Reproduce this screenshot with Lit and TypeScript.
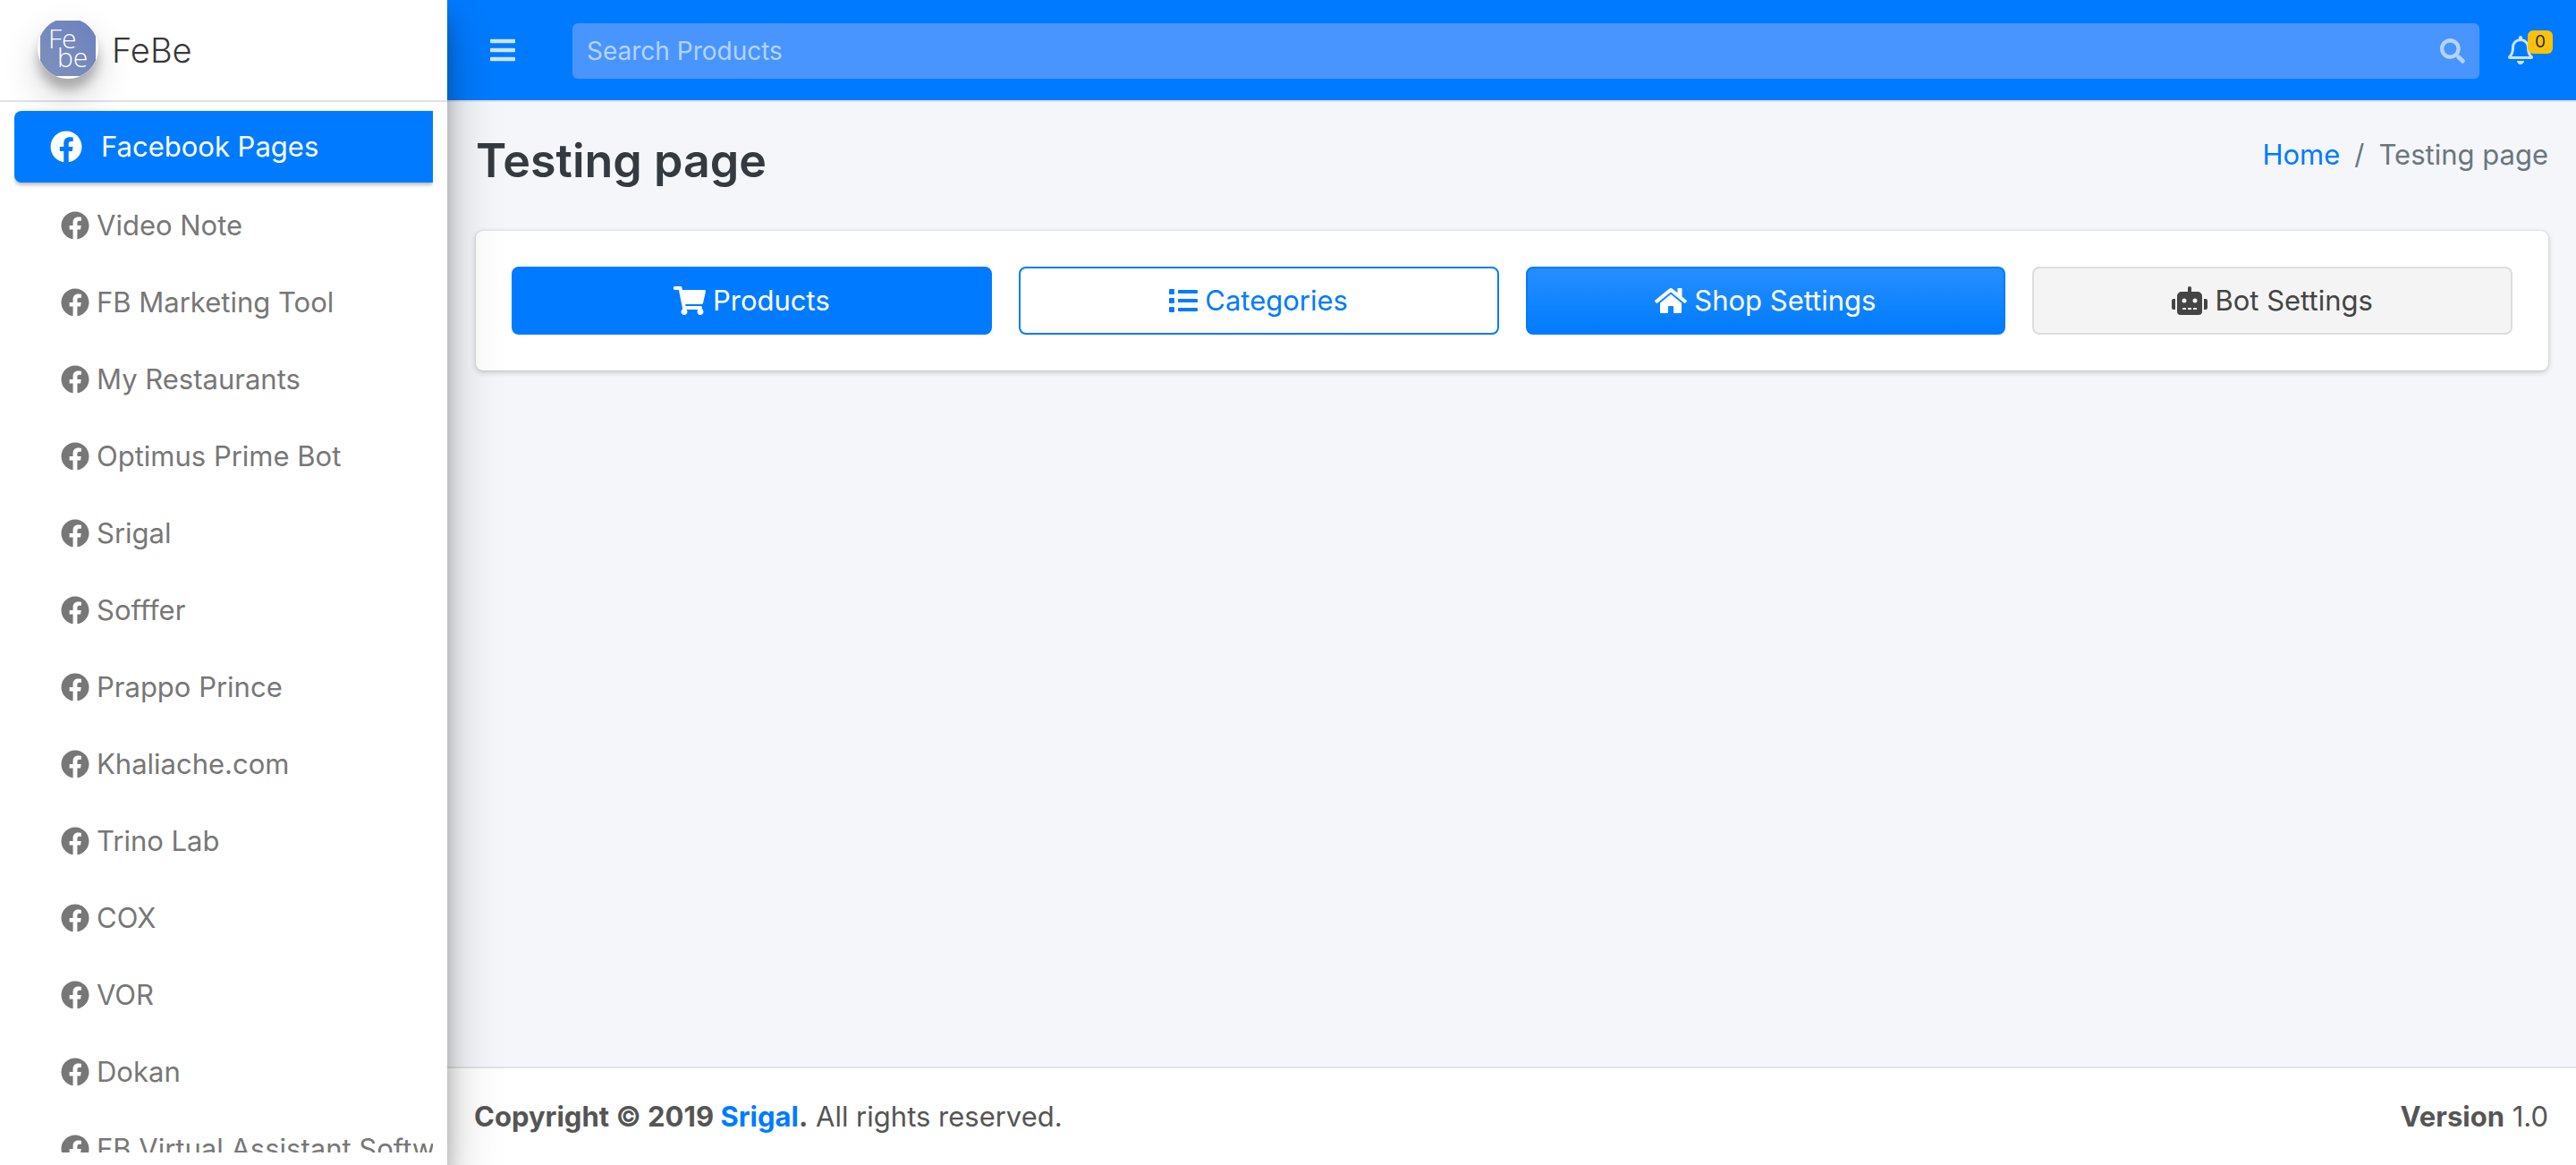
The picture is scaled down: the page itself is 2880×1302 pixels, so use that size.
import { LitElement, html, css, svg } from "lit";
import { customElement } from "lit/decorators.js";

const icons = {
  facebook: { box: "0 0 512 512", d: "M504 256C504 119 393 8 256 8S8 119 8 256c0 123.78 90.69 226.38 209.25 245V327.69h-63V256h63v-54.64c0-62.15 37-96.48 93.67-96.48 27.14 0 55.52 4.84 55.52 4.84v61h-31.28c-30.8 0-40.41 19.12-40.41 38.73V256h68.78l-11 71.69h-57.78V501C413.31 482.38 504 379.78 504 256z" },
  bars: { box: "0 0 448 512", d: "M16 132h416c8.837 0 16-7.163 16-16V76c0-8.837-7.163-16-16-16H16C7.163 60 0 67.163 0 76v40c0 8.837 7.163 16 16 16zm0 160h416c8.837 0 16-7.163 16-16v-40c0-8.837-7.163-16-16-16H16c-8.837 0-16 7.163-16 16v40c0 8.837 7.163 16 16 16zm0 160h416c8.837 0 16-7.163 16-16v-40c0-8.837-7.163-16-16-16H16c-8.837 0-16 7.163-16 16v40c0 8.837 7.163 16 16 16z" },
  search: { box: "0 0 512 512", d: "M505 442.7L405.3 343c-4.5-4.5-10.600-7-17-7H372c27.600-35.300 44-79.700 44-128C416 93.100 322.900 0 208 0S0 93.100 0 208s93.100 208 208 208c48.300 0 92.700-16.400 128-44v16.300c0 6.400 2.500 12.500 7 17l99.700 99.700c9.400 9.400 24.600 9.400 33.900 0l28.300-28.300c9.400-9.400 9.400-24.600.1-34zM208 336c-70.700 0-128-57.200-128-128 0-70.700 57.200-128 128-128 70.700 0 128 57.200 128 128 0 70.700-57.200 128-128 128z" },
  bell: { box: "0 0 448 512", d: "M439.39 362.29c-19.32-20.76-55.47-51.99-55.47-154.29 0-77.7-54.48-139.9-127.94-155.16V32c0-17.67-14.32-32-31.98-32s-31.98 14.33-31.98 32v20.84C118.56 68.1 64.08 130.3 64.08 208c0 102.3-36.15 133.53-55.47 154.29-6 6.45-8.66 14.16-8.61 21.71.11 16.4 12.98 32 32.1 32h383.8c19.12 0 32-15.6 32.1-32 .05-7.55-2.61-15.27-8.61-21.71zM67.53 368c21.22-27.97 44.42-74.33 44.53-159.42 0-.2-.06-.38-.06-.58 0-61.86 50.14-112 112-112s112 50.14 112 112c0 .2-.06.38-.06.58.11 85.1 23.31 131.46 44.53 159.42H67.53zM224 512c35.32 0 63.97-28.65 63.97-64H160.03c0 35.35 28.65 64 63.97 64z" },
  cart: { box: "0 0 576 512", d: "M528.12 301.319l47.273-208C578.806 78.301 567.391 64 551.99 64H159.208l-9.166-44.81C147.758 8.021 137.93 0 126.529 0H24C10.745 0 0 10.745 0 24v16c0 13.255 10.745 24 24 24h69.883l70.248 343.435C147.325 417.1 136 435.222 136 456c0 30.928 25.072 56 56 56s56-25.072 56-56c0-15.674-6.447-29.835-16.824-40h209.647C430.447 426.165 424 440.326 424 456c0 30.928 25.072 56 56 56s56-25.072 56-56c0-22.172-12.888-41.332-31.579-50.405l5.517-24.276c3.413-15.018-8.002-29.319-23.403-29.319H218.117l-6.545-32h293.145c11.206 0 20.920-7.754 23.403-18.681z" },
  list: { box: "0 0 512 512", d: "M80 368H16a16 16 0 0 0-16 16v64a16 16 0 0 0 16 16h64a16 16 0 0 0 16-16v-64a16 16 0 0 0-16-16zm0-320H16A16 16 0 0 0 0 64v64a16 16 0 0 0 16 16h64a16 16 0 0 0 16-16V64a16 16 0 0 0-16-16zm0 160H16a16 16 0 0 0-16 16v64a16 16 0 0 0 16 16h64a16 16 0 0 0 16-16v-64a16 16 0 0 0-16-16zm416 176H176a16 16 0 0 0-16 16v32a16 16 0 0 0 16 16h320a16 16 0 0 0 16-16v-32a16 16 0 0 0-16-16zm0-320H176a16 16 0 0 0-16 16v32a16 16 0 0 0 16 16h320a16 16 0 0 0 16-16V80a16 16 0 0 0-16-16zm0 160H176a16 16 0 0 0-16 16v32a16 16 0 0 0 16 16h320a16 16 0 0 0 16-16v-32a16 16 0 0 0-16-16z" },
  home: { box: "0 0 576 512", d: "M280.37 148.26L96 300.11V464a16 16 0 0 0 16 16l112.06-.29a16 16 0 0 0 15.920-16V368a16 16 0 0 1 16-16h64a16 16 0 0 1 16 16v95.640a16 16 0 0 0 16 16.050L464 480a16 16 0 0 0 16-16V300L295.670 148.260a12.190 12.190 0 0 0-15.300 0zM571.600 251.470L488 182.560V44.050a12 12 0 0 0-12-12h-56a12 12 0 0 0-12 12v72.610L318.470 43a48 48 0 0 0-61 0L4.340 251.470a12 12 0 0 0-1.600 16.900l25.500 31A12 12 0 0 0 45.150 301l235.220-193.740a12.190 12.190 0 0 1 15.300 0L530.900 301a12 12 0 0 0 16.900-1.600l25.500-31a12 12 0 0 0-1.700-16.930z" },
  robot: { box: "0 0 640 512", d: "M32 224h32v192H32a31.962 31.962 0 0 1-32-32V256a31.962 31.962 0 0 1 32-32zm512-48v272a64.063 64.063 0 0 1-64 64H160a64.063 64.063 0 0 1-64-64V176a79.974 79.974 0 0 1 80-80h112V32a32 32 0 0 1 64 0v64h112a79.974 79.974 0 0 1 80 80zm-280 80a40 40 0 1 0-40 40 39.997 39.997 0 0 0 40-40zm-8 128h-64v32h64zm96 0h-64v32h64zm104-128a40 40 0 1 0-40 40 39.997 39.997 0 0 0 40-40zm-8 128h-64v32h64zm192-128v128a31.962 31.962 0 0 1-32 32h-32V224h32a31.962 31.962 0 0 1 32 32z" },
};

type IconName = keyof typeof icons;

const icon = (name: IconName) => html`<svg class="icon" viewBox=${icons[name].box} aria-hidden="true">
  ${svg`<path d=${icons[name].d}></path>`}
</svg>`;

const pages = [
  "Video Note", "FB Marketing Tool", "My Restaurants", "Optimus Prime Bot", "Srigal",
  "Sofffer", "Prappo Prince", "Khaliache.com", "Trino Lab", "COX", "VOR", "Dokan",
  "FB Virtual Assistant Software",
];

const actions: { label: string; icon: IconName; style: string }[] = [
  { label: "Products", icon: "cart", style: "primary" },
  { label: "Categories", icon: "list", style: "outline" },
  { label: "Shop Settings", icon: "home", style: "gradient" },
  { label: "Bot Settings", icon: "robot", style: "plain" },
];

@customElement("app-root")
export class AppRoot extends LitElement {
  static styles = css`
    :host {
      display: grid;
      grid-template-columns: 500px minmax(0, 1fr);
      height: 100vh;
      overflow: hidden;
      font-family: Inter, "Liberation Sans", sans-serif;
      font-size: 31px;
      line-height: 48px;
      color: #212529;
      background: #f4f6f9;
    }
    * { box-sizing: border-box; }
    a { color: #007bff; text-decoration: none; }
    button, input { font: inherit; }
    ul, ol { list-style: none; margin: 0; padding: 0; }
    .icon { display: block; flex: none; height: 32px; fill: currentColor; }

    .sidebar {
      z-index: 2;
      display: flex;
      flex-direction: column;
      min-height: 0;
      padding-bottom: 14px;
      background: #fff;
      box-shadow: 0 28px 56px rgba(0, 0, 0, 0.25), 0 20px 20px rgba(0, 0, 0, 0.22);
    }
    .brand {
      display: flex;
      flex: none;
      align-items: center;
      gap: 15px;
      height: 114px;
      padding: 0 42px 4px;
      border-bottom: 2px solid #dee2e6;
      color: rgba(0, 0, 0, 0.8);
      font-size: 38px;
      font-weight: 300;
    }
    .brand-name { padding-top: 3px; }
    .logo {
      display: block;
      width: 68px;
      height: 68px;
      border-radius: 50%;
      background: #fff;
      box-shadow: 0 20px 40px rgba(0, 0, 0, 0.19), 0 12px 12px rgba(0, 0, 0, 0.23);
    }
    .logo-text { font-family: "Open Sans", sans-serif; font-weight: 300; fill: #fff; }
    .nav {
      flex: 1;
      min-height: 0;
      margin: 0 16px;
      padding-top: 10px;
      overflow: hidden;
    }
    .nav-link {
      display: flex;
      align-items: center;
      height: 80px;
      padding-left: 52px;
      gap: 8px;
      color: #777;
      white-space: nowrap;
    }
    .nav-link.active {
      padding-left: 40px;
      gap: 21px;
      border-radius: 8px 0 0 8px;
      background: #007bff;
      color: #fff;
      box-shadow: 0 2px 6px rgba(0, 0, 0, 0.12), 0 2px 4px rgba(0, 0, 0, 0.24);
    }
    .nav-link.active .icon { height: 36px; }
    .sub { display: grid; gap: 6px; padding-top: 8px; }

    .main { display: flex; flex-direction: column; min-width: 0; }
    .topbar {
      display: flex;
      flex: none;
      align-items: center;
      height: 114px;
      padding: 0 26px 0 48px;
      border-bottom: 2px solid #dee2e6;
      background: #007bff;
      color: rgba(255, 255, 255, 0.8);
    }
    .icon-button {
      display: flex;
      padding: 0;
      border: 0;
      background: none;
      color: inherit;
    }
    .search {
      display: flex;
      flex: 1;
      align-items: center;
      height: 62px;
      margin: 2px 32px 0 64px;
      padding: 0 16px;
      border-radius: 6px;
      background: #4895ff;
      color: rgba(255, 255, 255, 0.6);
    }
    .search-input {
      flex: 1;
      min-width: 0;
      padding: 0;
      border: 0;
      outline: 0;
      background: none;
      color: #fff;
      font-size: 28px;
    }
    .search-input::placeholder { color: rgba(255, 255, 255, 0.6); opacity: 1; }
    .search .icon { height: 28px; }
    .bell-button { position: relative; margin-right: 22px; }
    .badge {
      position: absolute;
      top: -6px;
      left: 22px;
      width: 28px;
      height: 26px;
      border-radius: 6px;
      background: #ffc107;
      color: #1f2d3d;
      font-size: 19px;
      line-height: 26px;
      text-align: center;
    }

    .content { flex: 1; padding: 30px 31px 0 32px; }
    .page-head {
      display: flex;
      justify-content: space-between;
      height: 114px;
    }
    .title {
      margin: 0;
      color: #343a40;
      font-size: 52px;
      font-weight: 600;
      line-height: 72px;
    }
    .crumbs { display: flex; gap: 16px; padding-top: 5px; color: #6c757d; }
    .card {
      display: grid;
      grid-template-columns: repeat(4, minmax(0, 1fr));
      gap: 30px;
      padding: 40px;
      border-radius: 8px;
      background: #fff;
      box-shadow: 0 0 2px rgba(0, 0, 0, 0.125), 0 2px 6px rgba(0, 0, 0, 0.2);
    }
    .action {
      display: flex;
      align-items: center;
      justify-content: center;
      gap: 8px;
      height: 76px;
      padding: 0;
      border: 2px solid #007bff;
      border-radius: 8px;
    }
    .primary { background: #007bff; color: #fff; }
    .outline { background: #fff; color: #007bff; }
    .gradient { background: #007bff linear-gradient(180deg, #268fff, #007bff); color: #fff; }
    .plain { background: #f4f4f4; border-color: #ddd; color: #444; }

    .footer {
      display: flex;
      flex: none;
      justify-content: space-between;
      height: 110px;
      padding: 30px 31px 0 30px;
      border-top: 2px solid #dee2e6;
      background: #fff;
      color: #555;
    }
  `;

  render() {
    return html`
      <aside class="sidebar">
        <a class="brand" href="#">
          <svg class="logo" viewBox="0 0 68 68" aria-hidden="true">
            <defs>
              <linearGradient id="fill" x1="1" y1="0" x2="0" y2="1">
                <stop offset="0" stop-color="#6c82bf"></stop>
                <stop offset="1" stop-color="#7f90bb"></stop>
              </linearGradient>
              <clipPath id="disc"><circle cx="34" cy="34" r="34"></circle></clipPath>
            </defs>
            <rect x="3" y="3" width="62" height="62" fill="url(#fill)" clip-path="url(#disc)"></rect>
            <text class="logo-text" x="12" y="34" font-size="30">Fe</text>
            <text class="logo-text" x="22" y="55" font-size="30">be</text>
          </svg>
          <span class="brand-name">FeBe</span>
        </a>
        <nav class="nav">
          <a class="nav-link active" href="#">${icon("facebook")}<span>Facebook Pages</span></a>
          <ul class="sub">
            ${pages.map((page) => html`<li><a class="nav-link" href="#">${icon("facebook")}<span>${page}</span></a></li>`)}
          </ul>
        </nav>
      </aside>
      <div class="main">
        <header class="topbar">
          <button class="icon-button" type="button" aria-label="Menu">${icon("bars")}</button>
          <form class="search" role="search">
            <input class="search-input" type="search" placeholder="Search Products" aria-label="Search Products" />
            <button class="icon-button" type="button" aria-label="Search">${icon("search")}</button>
          </form>
          <button class="icon-button bell-button" type="button" aria-label="Notifications">
            ${icon("bell")}<span class="badge">0</span>
          </button>
        </header>
        <main class="content">
          <div class="page-head">
            <h1 class="title">Testing page</h1>
            <ol class="crumbs">
              <li><a href="#">Home</a></li>
              <li>/</li>
              <li>Testing page</li>
            </ol>
          </div>
          <section class="card">
            ${actions.map((a) => html`<button class="action ${a.style}" type="button">${icon(a.icon)}<span>${a.label}</span></button>`)}
          </section>
        </main>
        <footer class="footer">
          <span><strong>Copyright © 2019 <a href="#">Srigal</a>.</strong> All rights reserved.</span>
          <span><strong>Version</strong> 1.0</span>
        </footer>
      </div>
    `;
  }
}
